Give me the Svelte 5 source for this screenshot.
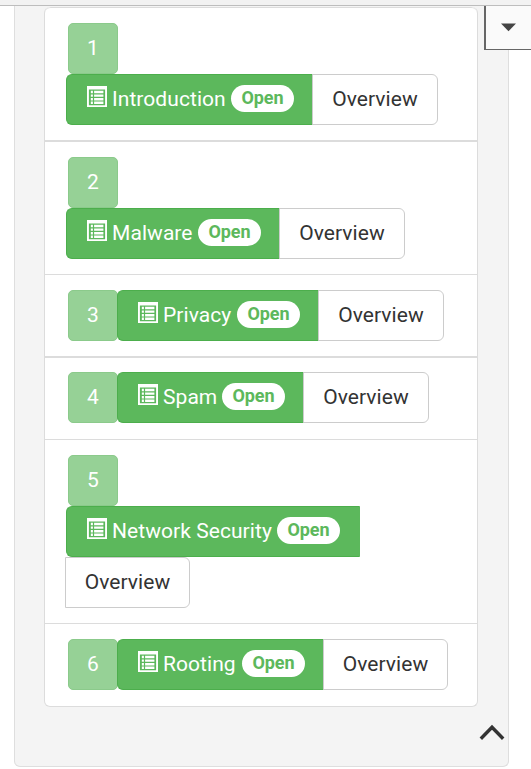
<script>
  const topics = [
    { name: 'Introduction', kind: 'stacked', height: 133, pad: 15, line: 1, label: 119, button: 247, overview: 126 },
    { name: 'Malware', kind: 'stacked', height: 134, pad: 15, line: 2, label: 86, button: 214, overview: 126 },
    { name: 'Privacy', kind: 'inline', height: 82, pad: 15, line: 1, label: 74, button: 202, overview: 126 },
    { name: 'Spam', kind: 'inline', height: 83, pad: 14, line: 2, label: 59, button: 187, overview: 126 },
    { name: 'Network Security', kind: 'wrapped', height: 184, pad: 15, line: 1, label: 165, button: 294, overview: 125 },
    { name: 'Rooting', kind: 'inline', height: 82, pad: 15, line: 1, label: 79, button: 207, overview: 125 }
  ];
</script>

<div class="page">
  <header></header>
  <main>
    <section class="panel">
      <ul>
        {#each topics as topic, i}
          <li class={topic.kind} style="height:{topic.height}px;padding-top:{topic.pad}px;border-top-width:{topic.line}px">
            <span class="number">{i + 1}</span>
            <div class="group">
              <button class="topic" style="width:{topic.button}px">
                <svg width="20" height="21" viewBox="0 0 20 21">
                  <path fill="#fff" d="M0 0H20V21H0Z" />
                  <path fill="none" stroke="#5cb85c" stroke-width="1.2" d="M2.5 4.2H17.5V18.6H2.5ZM2.5 7.8H17.5M2.5 11.4H17.5M2.5 15H17.5M6.5 4.2V18.6" />
                  <path fill="none" stroke="#5cb85c" stroke-width=".8" d="M3.5 4V19M16.8 4V19" />
                </svg>
                <span class="label" style="width:{topic.label}px">{topic.name}</span>
                <span class="badge">Open</span>
              </button>
              <button class="overview" style="width:{topic.overview}px">Overview</button>
            </div>
          </li>
        {/each}
      </ul>
    </section>
  </main>
  <button class="dropdown" aria-label="Open menu">
    <svg width="16" height="9" viewBox="0 0 16 9"><path fill="#444" d="M0 .5H15L7.5 8.3Z" /></svg>
  </button>
  <button class="to-top" aria-label="Back to top">
    <svg width="26" height="17" viewBox="0 0 26 17"><path fill="none" stroke="#333" stroke-width="3.4" d="M1.8 14.7 13 3.2 24.2 14.7" /></svg>
  </button>
</div>

<style>
  :global(body) { margin: 0; background: #fff; }
  * { box-sizing: border-box; }
  .page {
    position: relative;
    width: 531px;
    height: 769px;
    overflow: hidden;
    font: 21px/1.43 Roboto, sans-serif;
    letter-spacing: .06px;
  }
  header { height: 6px; background: #f2f2f2; border-bottom: 1px solid #bdbdbd; }
  main { padding: 0 22px 0 14px; }
  .panel {
    height: 761px;
    padding: 1px 29px 0;
    background: #f4f4f4;
    border: solid #dedede;
    border-width: 0 1px 1px;
    border-radius: 0 0 6px 6px;
  }
  ul {
    list-style: none;
    margin: 0;
    padding: 0;
    width: 434px;
    height: 700px;
    background: #fff;
    border: 1px solid #dcdcdc;
    border-top: 0;
    border-radius: 6px;
    overflow: hidden;
  }
  li {
    display: flex;
    padding-left: 23px;
    border-top: 1px solid #dcdcdc;
  }
  li:first-child { border-radius: 6px 6px 0 0; }
  .stacked, .wrapped { flex-direction: column; }
  .number {
    width: 50px;
    height: 51px;
    flex: none;
    line-height: 48px;
    text-align: center;
    color: #fff;
    background: #96d196;
    border: 1px solid #8bca8b;
    border-radius: 5px;
  }
  .group { display: flex; margin-left: -1px; }
  .stacked .group, .wrapped .group { margin-left: -2px; }
  .wrapped .group { flex-direction: column; }
  button { font: inherit; letter-spacing: inherit; padding: 0; margin: 0; }
  .topic {
    display: flex;
    flex: none;
    height: 51px;
    padding: 0 0 0 20px;
    color: #fff;
    background: #5cb85c;
    border: 1px solid #4cae4c;
    border-right-color: #5cb85c;
    border-radius: 6px 0 0 6px;
    text-align: left;
  }
  .topic svg { flex: none; margin-top: 11px; }
  .label { flex: none; padding-left: 5px; margin-right: -5px; box-sizing: content-box; line-height: 49px; white-space: nowrap; }
  .badge {
    flex: none;
    margin: 10px 0 0 5px;
    width: 63px;
    height: 27px;
    border-radius: 14px;
    background: #fff;
    color: #5cb85c;
    font-size: 18px;
    font-weight: 700;
    letter-spacing: -.1px;
    line-height: 26px;
    text-align: center;
  }
  .overview {
    height: 51px;
    margin-left: -1px;
    line-height: 49px;
    text-align: center;
    color: #333;
    background: #fff;
    border: 1px solid #ccc;
    border-radius: 0 6px 6px 0;
  }
  .dropdown {
    position: absolute;
    left: 484px;
    top: 6px;
    width: 48px;
    height: 44px;
    padding: 17px 0 0 15px;
    display: flex;
    background: #fafafa;
    border: solid #666;
    border-width: 0 0 1px 2px;
  }
  .to-top {
    position: absolute;
    left: 479px;
    top: 724px;
    display: flex;
    border: 0;
    background: none;
  }
</style>
